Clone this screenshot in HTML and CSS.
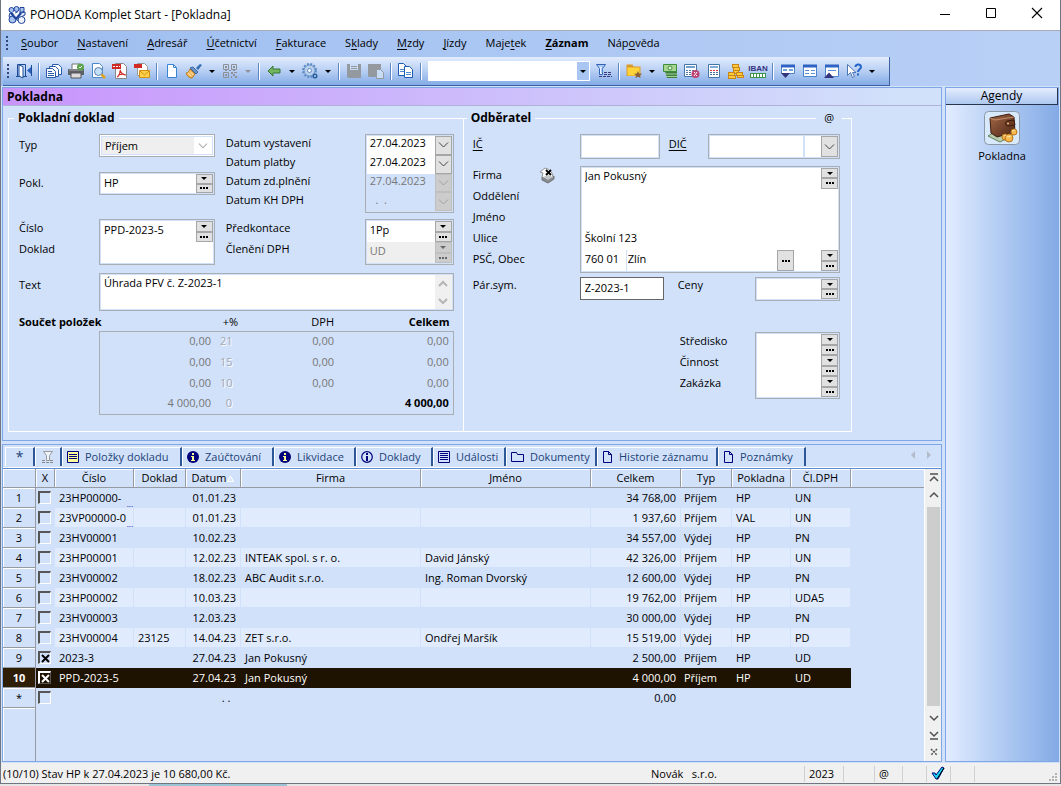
FILE: index.html
```
<!DOCTYPE html>
<html lang="cs">
<head>
  <meta charset="UTF-8">
  <meta name="viewport" content="width=device-width, initial-scale=1.0">
  <title>POHODA Komplet Start - [Pokladna]</title>
  <link rel="stylesheet" href="styles.css">
</head>
<body>
  <div class="window">
    <header class="titlebar">
      <svg class="logo" width="18" height="18" viewBox="0 0 18 18"><g fill="#a9c3ef" stroke="#1c4299"><circle cx="3.500" cy="4" r="2.500"/><circle cx="8.500" cy="3" r="2.500"/><path d="M12 1.500h4v4l-4 1z"/><path d="M2 7l4 1 3-2 4 1 4-1v3l-4 2 1 2-3 2-4-2-4 1-2-4z" fill="#dfe9fb"/><circle cx="4.500" cy="13.500" r="3.500"/><circle cx="13.500" cy="14" r="3.500" fill="#eef3fd"/></g><path d="M3 7l5 6M13 7L8 13" fill="none" stroke="#1c4299" stroke-width="2"/><path d="M5 6l3 3 3-3" fill="none" stroke="#fff" stroke-width="1.500"/></svg>
      <span class="title">POHODA Komplet Start - [Pokladna]</span>
      <button class="wbtn" aria-label="Minimalizovat"><svg width="12" height="12" viewBox="0 0 12 12"><path d="M1 7.500h10" stroke="#000"/></svg></button>
      <button class="wbtn" aria-label="Maximalizovat"><svg width="12" height="12" viewBox="0 0 12 12"><path d="M1.500 1.500h9v9h-9z" fill="none" stroke="#000"/></svg></button>
      <button class="wbtn" aria-label="Zavřít"><svg width="12" height="12" viewBox="0 0 12 12"><path d="M1 1l10 10M11 1L1 11" stroke="#000" stroke-width="1.100"/></svg></button>
    </header>

    <nav class="menubar">
      <span class="grip"></span>
      <button><u>S</u>oubor</button>
      <button><u>N</u>astavení</button>
      <button><u>A</u>dresář</button>
      <button><u>Ú</u>četnictví</button>
      <button><u>F</u>akturace</button>
      <button>S<u>k</u>lady</button>
      <button><u>M</u>zdy</button>
      <button><u>J</u>ízdy</button>
      <button>Maje<u>t</u>ek</button>
      <button class="strong"><u>Z</u>áznam</button>
      <button>Náp<u>o</u>věda</button>
    </nav>

    <div class="toolrow">
      <div class="toolbar">
        <span class="grip"></span>
        <button class="tool" aria-label="Zavřít agendu"><svg viewBox="0 0 16 16"><path d="M1.500 13V1.500h8V13M0 13.500h11" fill="none" stroke="#1c4c95"/><path d="M3 2l4 1.500V15l-4-2z" fill="#fff" stroke="#1c4c95"/><path d="M11 7.500L15 4v7z" fill="#2b62c0"/><path d="M15.500 2v11" stroke="#1c4c95"/></svg></button>
        <span class="sep"></span>
        <button class="tool" aria-label="Kopie záznamů"><svg viewBox="0 0 16 16"><g fill="#fff" stroke="#2a5ca8"><path d="M6.500 1.500h6l3 3v7h-9z"/><path d="M3.500 3.500h6l3 3v7h-9z"/><path d="M.5 5.500h6l3 3v6H.5z"/></g><path d="M2 8.500h4M2 10.500h6M2 12.500h6" stroke="#2a5ca8"/></svg></button>
        <button class="tool" aria-label="Tisk"><svg viewBox="0 0 16 16"><path d="M4 6V1h8v5" fill="#fff" stroke="#777"/><path d="M0 6h16v6H0z" fill="#5d6066"/><path d="M1 7h14" stroke="#aaa"/><path d="M3 10h10v5H3z" fill="#ddd" stroke="#555"/><circle cx="12.500" cy="4" r="3.500" fill="#5aa54c"/><path d="M11 4l1 1 2-2" fill="none" stroke="#fff"/></svg></button>
        <button class="tool" aria-label="Náhled"><svg viewBox="0 0 16 16"><path d="M2.500.5h7l3 3v11h-10z" fill="#fff" stroke="#4a88c8"/><circle cx="8.500" cy="8.500" r="4" fill="#c3e0fa" stroke="#5a7fae"/><path d="M11.500 11.500l3.500 3.500" stroke="#e3a21c" stroke-width="2.500"/></svg></button>
        <button class="tool" aria-label="PDF"><svg viewBox="0 0 16 16"><path d="M3.500.5h8l3 3v12h-11z" fill="#fff" stroke="#888"/><path d="M0 1h9v5H0z" fill="#cf2b24"/><path d="M1 3.500h7" stroke="#fff" stroke-dasharray="2 1"/><path d="M8 7c1 3 2 5 6 5M8 8c0 3-1 5-3 6M6 12l6-1" fill="none" stroke="#cf2b24" stroke-width="1.200"/></svg></button>
        <button class="tool" aria-label="PDF e-mailem"><svg viewBox="0 0 16 16"><path d="M3.500.5h7l3 3v9h-10z" fill="#fff" stroke="#999"/><path d="M0 1h8v4H0z" fill="#cf2b24"/><path d="M5.500 7.500h10v7h-10z" fill="#ffd04a" stroke="#d38e12"/><path d="M6 8l4.500 4L15 8" fill="none" stroke="#d38e12"/></svg></button>
        <span class="sep"></span>
        <button class="tool" aria-label="Nový"><svg viewBox="0 0 16 16"><path d="M3.500 1.500h6l3 3v10h-9z" fill="#fff" stroke="#3a84d4"/><path d="M9.500 1.500v3h3" fill="none" stroke="#3a84d4"/></svg></button>
        <button class="tool" aria-label="Vzhled"><svg viewBox="0 0 16 16"><path d="M10 5l4-4 2 1-4 5z" fill="#356cb2"/><path d="M7 4l5 5-2 2-6-6z" fill="#6b95cb" stroke="#3e66a0"/><path d="M4 6l5 5-3 4c-3 0-5-2-6-5 2 0 3-2 4-4z" fill="#f1b85c" stroke="#b87c26"/><path d="M2 10l3 3M5 9l2 3" stroke="#fbe2ae"/></svg></button>
        <button class="caret" aria-label="Další"></button>
        <button class="tool" disabled aria-label="QR kód"><svg viewBox="0 0 16 16"><path d="M1.500 1.500h5v5h-5zM9.500 1.500h5v5h-5zM1.500 9.500h5v5h-5z" fill="none" stroke="#8d9096"/><path d="M3 3h2v2H3zM11 3h2v2h-2zM3 11h2v2H3zM9 9h2v2H9zM12 9h3v1h-3zM11 11h2v2h-2zM9 13h1v2H9zM13 13h2v2h-2zM7 7h2v1H7zM11 7h2v1h-2zM3 7h2v1H3z" fill="#8d9096"/></svg></button>
        <button class="caret off" disabled aria-label="Další"></button>
        <span class="sep"></span>
        <button class="tool" aria-label="Zpět"><svg viewBox="0 0 16 16"><path d="M2 8l5-5v3h7v4H7v3z" fill="#73b55e" stroke="#35763a"/></svg></button>
        <button class="caret" aria-label="Další"></button>
        <button class="tool" aria-label="Nastavení"><svg viewBox="0 0 16 16"><circle cx="7.500" cy="7.500" r="6.500" fill="none" stroke="#5e8cc4" stroke-width="2" stroke-dasharray="2 1.400"/><circle cx="7.500" cy="7.500" r="5.500" fill="#b9d0ed" stroke="#5e8cc4"/><circle cx="7.500" cy="7.500" r="2" fill="#fff" stroke="#5e8cc4"/><circle cx="13" cy="13" r="2.500" fill="#285d9b"/><circle cx="13" cy="13" r="1" fill="#b9d0ed"/></svg></button>
        <button class="caret" aria-label="Další"></button>
        <span class="sep"></span>
        <button class="tool" disabled aria-label="Uložit"><svg viewBox="0 0 16 16"><path d="M1 1h14v14H2l-1-1z" fill="#94989f"/><path d="M4 1h8v6H4z" fill="#c9dcf5"/><path d="M5 3.500h6M5 5.500h6" stroke="#94989f"/></svg></button>
        <button class="tool" disabled aria-label="Uložit kopii"><svg viewBox="0 0 16 16"><path d="M0 1h13v13H1l-1-1z" fill="#94989f"/><path d="M8.500 6.500h4l3 3v6h-7z" fill="#c9dcf5" stroke="#94989f"/></svg></button>
        <span class="sep"></span>
        <button class="tool" aria-label="Kopírovat"><svg viewBox="0 0 16 16"><g fill="#fff" stroke="#1c5cb0"><path d="M.5.5h5l3 3v9h-8z"/><path d="M6.500 3.500h5l3 3v8h-8z"/></g><path d="M2 6.500h4M2 8.500h4M8 9.500h5M8 11.500h5" stroke="#4e8ad0"/></svg></button>
        <span class="sep"></span>
        <select class="find" aria-label="Hledat"><option></option></select>
        <button class="tool" aria-label="Filtr"><svg viewBox="0 0 16 16"><path d="M.5 1.500h9l-3 4v6h-3v-6z" fill="#eaf3ff" stroke="#2f62b8"/><path d="M2 3h6l-2 2v5" fill="none" stroke="#6ea0e4"/><path d="M3 13.500h13M8 11.500h8M8 9.500h8" stroke="#3b3a7c" stroke-dasharray="3 1"/></svg></button>
        <span class="sep"></span>
        <button class="tool" aria-label="Oblíbené"><svg viewBox="0 0 16 16"><path d="M.5 13V1.500h6l1 2h7V13z" fill="#d99a2c"/><path d="M1.500 12.500v-8h12v8z" fill="#ffd438"/><path d="M12 8l1.200 2.400 2.800.3-2 1.800.6 2.500-2.600-1.300L9.400 15l.6-2.500-2-1.800 2.800-.3z" fill="#8b6238"/></svg></button>
        <button class="caret" aria-label="Další"></button>
        <button class="tool" aria-label="Hotovost"><svg viewBox="0 0 16 16"><path d="M2 5h13v10H5z" fill="#3b7e40"/><path d="M3 11h12M4 13.500h11" stroke="#a8d09a"/><path d="M1.500 1.500h13v7h-13z" fill="#a8d690" stroke="#3e8c3d"/><circle cx="8" cy="5" r="2" fill="#e3f6d5" stroke="#3e8c3d"/></svg></button>
        <button class="tool" aria-label="Kalkulačka daně"><svg viewBox="0 0 16 16"><path d="M.5 1.500h12v12H.5z" fill="#fff" stroke="#4875a8"/><path d="M2 3h9v2H2z" fill="#719fd0"/><path d="M2 7.500h9M2 9.500h6M2 11.500h6" stroke="#5379a7" stroke-dasharray="2 1"/><circle cx="11.500" cy="11" r="4" fill="#bd4473"/><path d="M13 9l-3 4M10 9.500h1M12 12.500h1" stroke="#fff"/></svg></button>
        <button class="tool" aria-label="Kalkulačka"><svg viewBox="0 0 16 16"><path d="M2.500 1.500h11v13h-11z" fill="#fff" stroke="#4875a8"/><path d="M4 3h8v2H4z" fill="#82abe0"/><path d="M4 7.500h8" stroke="#d33" stroke-dasharray="2 1"/><path d="M4 9.500h8M4 11.500h8" stroke="#416f9e" stroke-dasharray="2 1"/></svg></button>
        <button class="tool" aria-label="Mince"><svg viewBox="0 0 16 16"><g fill="#ffc93c" stroke="#c8861a"><rect x="4.500" y="1.500" width="6" height="3"/><rect x="5.500" y="4.500" width="6" height="3"/><rect x="5.500" y="7.500" width="5" height="3"/><rect x=".5" y="9.500" width="6" height="3"/><rect x=".5" y="12.500" width="7" height="3"/><rect x="8.500" y="9.500" width="6" height="3"/><rect x="9.500" y="12.500" width="6" height="2"/></g></svg></button>
        <button class="tool iban" aria-label="Kontrola IBAN"><b>IBAN</b><i></i></button>
        <span class="sep"></span>
        <button class="tool" aria-label="Dolní okno"><svg viewBox="0 0 16 16"><path d="M1.500 2.500h13v8h-13z" fill="#fff" stroke="#4c84cb"/><path d="M1 1.500h14v3H1z" fill="#2e63c4"/><path d="M3 7h4M9 7h4" stroke="#74a3dc" stroke-width="2"/><path d="M1 10h9l-4.500 5z" fill="#34347d"/></svg></button>
        <button class="tool" aria-label="Okno"><svg viewBox="0 0 16 16"><path d="M1.500 2.500h13v11h-13z" fill="#fff" stroke="#4c84cb"/><path d="M1 1.500h14v3H1z" fill="#2e63c4"/><path d="M3 7.500h4M9 7.500h4M3 10.500h4M9 10.500h4" stroke="#5c8dce"/></svg></button>
        <button class="tool" aria-label="Horní okno"><svg viewBox="0 0 16 16"><path d="M1.500 2.500h13v11h-13z" fill="#fff" stroke="#4c84cb"/><path d="M1 1.500h14v3H1z" fill="#2e63c4"/><path d="M4 7.500h8" stroke="#5c8dce"/><path d="M0 15h10L5 9.500z" fill="#34347d"/></svg></button>
        <button class="tool" aria-label="Nápověda"><svg viewBox="0 0 16 16"><path d="M1.500 1.500v11l3-3 2 5 2-1-2-4h3.500z" fill="#fff" stroke="#4d76b4"/><path d="M9.500 4c0-3.500 5.500-3.500 5.500 0 0 2-3 2.500-3 5M12 10.500v2" fill="none" stroke="#2767c8" stroke-width="2"/></svg></button>
        <button class="caret" aria-label="Další"></button>
      </div>
    </div>

    <main class="work">
      <div class="agenda">
        <section class="panel">
          <h1>Pokladna</h1>
          <form class="form">
            <fieldset class="doc">
              <legend>Pokladní doklad</legend>
              <div class="pair">
                <div class="fields left">
                  <label for="typ">Typ</label>
                  <div class="box typ"><select id="typ" disabled><option>Příjem</option></select></div>
                  <label for="pokl">Pokl.</label>
                  <div class="box pokl">
                    <div class="line"><input id="pokl" value="HP"><span class="spin"><button type="button" class="drop" aria-label="Seznam"></button><button type="button" class="dots" aria-label="Vybrat"></button></span></div>
                  </div>
                  <div class="labels high"><label for="cislo">Číslo</label><label for="doklad">Doklad</label></div>
                  <div class="box">
                    <div class="line"><input id="cislo" value="PPD-2023-5"><span class="spin"><button type="button" class="drop" aria-label="Seznam"></button><button type="button" class="dots" aria-label="Vybrat"></button></span></div>
                    <div class="line"><input id="doklad"></div>
                  </div>
                </div>
                <div class="fields right">
                  <div class="labels high dates"><label for="d1">Datum vystavení</label><label for="d2">Datum platby</label><label for="d3">Datum zd.plnění</label><label for="d4">Datum KH DPH</label></div>
                  <div class="box dates">
                    <div class="line"><input id="d1" value="27.04.2023"><button type="button" class="chev" aria-label="Kalendář"></button></div>
                    <div class="line"><input id="d2" value="27.04.2023"><button type="button" class="chev" aria-label="Kalendář"></button></div>
                    <div class="line"><input id="d3" value="27.04.2023" disabled><button type="button" class="chev" disabled aria-label="Kalendář"></button></div>
                    <div class="line"><input id="d4" value="  .  ." disabled><button type="button" class="chev" disabled aria-label="Kalendář"></button></div>
                  </div>
                  <div class="labels high"><label for="predk">Předkontace</label><label for="clen">Členění DPH</label></div>
                  <div class="box">
                    <div class="line"><input id="predk" value="1Pp"><span class="spin"><button type="button" class="drop" aria-label="Seznam"></button><button type="button" class="dots" aria-label="Vybrat"></button></span></div>
                    <div class="line"><input id="clen" class="grey" value="UD" disabled><span class="spin"><button type="button" class="drop" disabled aria-label="Seznam"></button><button type="button" class="dots" disabled aria-label="Vybrat"></button></span></div>
                  </div>
                </div>
              </div>
              <div class="textrow">
                <label for="text">Text</label>
                <div class="box"><textarea id="text">Úhrada PFV č. Z-2023-1</textarea>
                  <span class="mini"><svg viewBox="0 0 10 8"><path d="M1 6l4-4 4 4"/></svg><svg viewBox="0 0 10 8"><path d="M1 2l4 4 4-4"/></svg></span></div>
              </div>
              <table class="totals">
                <colgroup><col class="t-label"><col class="t-base"><col class="t-pct"><col class="t-dph"><col></colgroup>
                <thead><tr><th colspan="2">Součet položek</th><th class="pct">+%</th><th class="dph">DPH</th><th>Celkem</th></tr></thead>
                <tbody>
                  <tr><td></td><td>0,00</td><td>21</td><td>0,00</td><td>0,00</td></tr>
                  <tr><td></td><td>0,00</td><td>15</td><td>0,00</td><td>0,00</td></tr>
                  <tr><td></td><td>0,00</td><td>10</td><td>0,00</td><td>0,00</td></tr>
                  <tr><td></td><td>4 000,00</td><td>&nbsp; 0</td><td></td><td class="sum">4 000,00</td></tr>
                </tbody>
              </table>
            </fieldset>

            <fieldset class="buyer">
              <legend>Odběratel</legend>
              <span class="at">@</span>
              <div class="brow ids">
                <label for="ic"><u>IČ</u></label>
                <div class="box ic"><div class="line"><input id="ic"></div></div>
                <label for="dic" class="diclabel"><u>DIČ</u></label>
                <div class="box dic"><div class="line"><input id="dic"><input class="dicend" aria-label="DIČ skupiny"><button type="button" class="chev" aria-label="Seznam"></button></div></div>
              </div>
              <div class="brow addr">
                <div class="labels"><label for="firma">Firma</label><label for="odd">Oddělení</label><label for="jm">Jméno</label><label for="ul">Ulice</label><label for="psc">PSČ, Obec</label></div>
                <svg class="cube" width="16" height="18" viewBox="0 0 16 18"><path d="M3 11l6 3 6-4v3l-6 4-6-3z" fill="#8b8f94" stroke="#6d7074"/><path d="M3 11l1-4-3-1 5-4 3 1 4 4 1 4-5 2z" fill="#fff" stroke="#8f949b"/><path d="M4 11l5-2 5 2-5 3z" fill="#c2c5ca"/><path d="M7 4l5 5M12 4L7 9" stroke="#000" stroke-width="1.800"/></svg>
                <div class="box addrbox">
                  <div class="line"><input id="firma" value="Jan Pokusný"><span class="spin"><button type="button" class="drop" aria-label="Seznam"></button><button type="button" class="dots" aria-label="Vybrat"></button></span></div>
                  <div class="line"><input id="odd"></div>
                  <div class="line"><input id="jm"></div>
                  <div class="line"><input id="ul" value="Školní 123"></div>
                  <div class="line"><input id="psc" class="zip" value="760 01"><input class="city" aria-label="Obec" value="Zlín"><button type="button" class="dots tall" aria-label="Vybrat obec"></button><span class="hole"></span><span class="spin"><button type="button" class="drop" aria-label="Seznam"></button><button type="button" class="dots" aria-label="Vybrat"></button></span></div>
                </div>
              </div>
              <div class="brow last">
                <label for="par">Pár.sym.</label>
                <div class="box par"><div class="line"><input id="par" value="Z-2023-1"></div></div>
                <label for="ceny" class="cenylabel">Ceny</label>
                <div class="box small"><div class="line"><input id="ceny"><span class="spin"><button type="button" class="drop" aria-label="Seznam"></button><button type="button" class="dots" aria-label="Vybrat"></button></span></div></div>
              </div>
              <div class="brow centre">
                <div class="labels"><label for="st">Středisko</label><label for="ci">Činnost</label><label for="za">Zakázka</label></div>
                <div class="box small">
                  <div class="line"><input id="st"><span class="spin"><button type="button" class="drop" aria-label="Seznam"></button><button type="button" class="dots" aria-label="Vybrat"></button></span></div>
                  <div class="line"><input id="ci"><span class="spin"><button type="button" class="drop" aria-label="Seznam"></button><button type="button" class="dots" aria-label="Vybrat"></button></span></div>
                  <div class="line"><input id="za"><span class="spin"><button type="button" class="drop" aria-label="Seznam"></button><button type="button" class="dots" aria-label="Vybrat"></button></span></div>
                </div>
              </div>
            </fieldset>
          </form>
        </section>

        <section class="panel lower">
          <div class="tabs">
            <button class="tab star">*</button>
            <button class="tab funnel" aria-label="Filtr"><svg width="14" height="14" viewBox="0 0 14 14"><path d="M2.500 1.500h9l-3 4v5h-3v-5z" fill="#eef4fd" stroke="#999"/><path d="M1 10.500h4M9 10.500h4M1 12.500h12" stroke="#888" stroke-dasharray="3 1"/></svg></button>
            <button class="tab items"><svg width="12" height="12" viewBox="0 0 12 12"><path d="M.5.5h11v11H.5z" fill="#ff9" stroke="#00007c"/><path d="M2 3.500h8M2 5.500h8M2 7.500h8" stroke="#00007c"/></svg>Položky dokladu</button>
            <button class="tab post"><svg width="12" height="12" viewBox="0 0 12 12"><circle cx="6" cy="6" r="6" fill="#00007c"/><path d="M5 2h2v2H5zM4 5h3v4h1v1H4V9h1V6H4z" fill="#ff9"/></svg>Zaúčtování</button>
            <button class="tab pay"><svg width="12" height="12" viewBox="0 0 12 12"><circle cx="6" cy="6" r="6" fill="#00007c"/><path d="M5 2h2v2H5zM4 5h3v4h1v1H4V9h1V6H4z" fill="#ff9"/></svg>Likvidace</button>
            <button class="tab docs"><svg width="12" height="12" viewBox="0 0 12 12"><circle cx="6" cy="6" r="5.300" fill="none" stroke="#00007c" stroke-width="1.200"/><path d="M5 2h2v2H5zM5 5h2v5H5z" fill="#00007c"/></svg>Doklady</button>
            <button class="tab events"><svg width="12" height="12" viewBox="0 0 12 12"><path d="M.5.5h11v11H.5z" fill="none" stroke="#00007c"/><path d="M2 2.500h8M2 4.500h8M2 6.500h8M2 8.500h8" stroke="#00007c"/></svg>Události</button>
            <button class="tab files"><svg width="13" height="12" viewBox="0 0 13 12"><path d="M.5 10.500v-9h5l1 2h6v7z" fill="none" stroke="#00007c"/></svg>Dokumenty</button>
            <button class="tab history"><svg width="11" height="12" viewBox="0 0 11 12"><path d="M1.500.5h5l3 3v8h-8zM6.500.5v3h3" fill="none" stroke="#00007c"/></svg>Historie záznamu</button>
            <button class="tab notes"><svg width="11" height="12" viewBox="0 0 11 12"><path d="M1.500.5h5l3 3v8h-8zM6.500.5v3h3" fill="none" stroke="#00007c"/></svg>Poznámky</button>
            <span class="tabnav"><svg width="22" height="8" viewBox="0 0 22 8"><path d="M4 0v8L0 4zM16 0v8l4-4z" fill="#b5bcc9"/></svg></span>
          </div>
          <div class="gridwrap">
            <div class="gridarea">
              <table class="grid">
                <colgroup><col class="c-no"><col class="c-x"><col class="c-num"><col class="c-doc"><col class="c-date"><col class="c-firm"><col class="c-name"><col class="c-total"><col class="c-typ"><col class="c-cash"><col class="c-vat"><col></colgroup>
                <thead><tr><th></th><th>X</th><th>Číslo</th><th>Doklad</th><th class="sorted">Datum<svg width="7" height="7" viewBox="0 0 7 7"><path d="M.5 6.500L3.500 1l3 5.500z" fill="#dce8fb" stroke="#fff"/></svg></th><th>Firma</th><th>Jméno</th><th>Celkem</th><th>Typ</th><th>Pokladna</th><th>Čl.DPH</th><th></th></tr></thead>
                <tbody>
                  <tr><th>1</th><td><input type="checkbox" aria-label="Označit 1"></td><td>23HP00000-<a href="#">...</a></td><td></td><td>01.01.23</td><td></td><td></td><td>34 768,00</td><td>Příjem</td><td>HP</td><td>UN</td><td></td></tr>
                  <tr><th>2</th><td><input type="checkbox" aria-label="Označit 2"></td><td>23VP00000-0<a href="#">...</a></td><td></td><td>01.01.23</td><td></td><td></td><td>1 937,60</td><td>Příjem</td><td>VAL</td><td>UN</td><td></td></tr>
                  <tr><th>3</th><td><input type="checkbox" aria-label="Označit 3"></td><td>23HV00001</td><td></td><td>10.02.23</td><td></td><td></td><td>34 557,00</td><td>Výdej</td><td>HP</td><td>PN</td><td></td></tr>
                  <tr><th>4</th><td><input type="checkbox" aria-label="Označit 4"></td><td>23HP00001</td><td></td><td>12.02.23</td><td>INTEAK spol. s r. o.</td><td>David Jánský</td><td>42 326,00</td><td>Příjem</td><td>HP</td><td>UN</td><td></td></tr>
                  <tr><th>5</th><td><input type="checkbox" aria-label="Označit 5"></td><td>23HV00002</td><td></td><td>18.02.23</td><td>ABC Audit s.r.o.</td><td>Ing. Roman Dvorský</td><td>12 600,00</td><td>Výdej</td><td>HP</td><td>PN</td><td></td></tr>
                  <tr><th>6</th><td><input type="checkbox" aria-label="Označit 6"></td><td>23HP00002</td><td></td><td>10.03.23</td><td></td><td></td><td>19 762,00</td><td>Příjem</td><td>HP</td><td>UDA5</td><td></td></tr>
                  <tr><th>7</th><td><input type="checkbox" aria-label="Označit 7"></td><td>23HV00003</td><td></td><td>12.03.23</td><td></td><td></td><td>30 000,00</td><td>Výdej</td><td>HP</td><td>PN</td><td></td></tr>
                  <tr><th>8</th><td><input type="checkbox" aria-label="Označit 8"></td><td>23HV00004</td><td>23125</td><td>14.04.23</td><td>ZET s.r.o.</td><td>Ondřej Maršík</td><td>15 519,00</td><td>Výdej</td><td>HP</td><td>PD</td><td></td></tr>
                  <tr><th>9</th><td><input type="checkbox" checked aria-label="Označit 9"></td><td>2023-3</td><td></td><td>27.04.23</td><td>Jan Pokusný</td><td></td><td>2 500,00</td><td>Příjem</td><td>HP</td><td>UD</td><td></td></tr>
                  <tr class="selected"><th>10</th><td><input type="checkbox" checked aria-label="Označit 10"></td><td>PPD-2023-5</td><td></td><td>27.04.23</td><td>Jan Pokusný</td><td></td><td>4 000,00</td><td>Příjem</td><td>HP</td><td>UD</td><td></td></tr>
                  <tr><th>*</th><td><input type="checkbox" aria-label="Označit nový"></td><td></td><td></td><td>. . &nbsp;</td><td></td><td></td><td>0,00</td><td></td><td></td><td></td><td></td></tr>
                </tbody>
              </table>
              <div class="gutter"></div>
            </div>
            <div class="scroll">
              <svg viewBox="0 0 10 10"><path d="M1 1h8M1 8l4-4 4 4"/></svg>
              <svg viewBox="0 0 10 10"><path d="M1 7l4-4 4 4"/></svg>
              <span class="thumb"></span>
              <svg viewBox="0 0 10 10"><path d="M1 3l4 4 4-4"/></svg>
              <svg viewBox="0 0 10 10"><path d="M1 2l4 4 4-4M1 9h8"/></svg>
              <svg viewBox="0 0 10 10"><path d="M2 2l6 6M8 2L2 8" stroke-dasharray="2 1"/></svg>
            </div>
          </div>
        </section>
      </div>

      <aside class="side">
        <button class="sidehead">Agendy</button>
        <button class="shortcut">
          <svg width="36" height="34" viewBox="0 0 36 34"><defs><linearGradient id="leather" x1="0" y1="0" x2="1" y2="1"><stop offset="0" stop-color="#a56a48"/><stop offset="1" stop-color="#4b2414"/></linearGradient></defs><rect x=".5" y=".5" width="35" height="33" rx="4" fill="#d8e9fb" stroke="#8b98a6"/><path d="M4 25l8-5 12 7-8 4z" fill="#b8ceb0" stroke="#64805e"/><path d="M6 7l19-4 5 3 1 15-18 5-6-4z" fill="url(#leather)" stroke="#3d1c10"/><path d="M6 7l5 2 19-3" fill="none" stroke="#c08d6c"/><path d="M30 9l-7 1c-2 1-2 4 0 5l8-1z" fill="#6b3822" stroke="#3d1c10"/><circle cx="24" cy="12.500" r="1" fill="#e8c080"/><g fill="#f6b94e" stroke="#b97519"><circle cx="30" cy="21" r="3"/><circle cx="21" cy="26" r="3"/><circle cx="25" cy="27" r="4"/></g><path d="M28 20l3-1M20 25l2-1M23 26l4-1" stroke="#ffe9ad"/></svg>
          <span>Pokladna</span>
        </button>
      </aside>
    </main>

    <footer class="status">
      <span class="state">(10/10) Stav HP k 27.04.2023 je 10 680,00 Kč.</span>
      <span class="company">Novák &nbsp; s.r.o.</span>
      <span class="cell year">2023</span>
      <span class="cell gap"></span>
      <span class="cell mail">@</span>
      <span class="cell blank"></span>
      <span class="cell ok"><svg width="14" height="14" viewBox="0 0 14 14"><path d="M1 7l3 0 1 2 6-8 2 1-6 11H5z" fill="#19d3f0" stroke="#000080"/><path d="M6 13l7-11" stroke="#000"/></svg></span>
      <span class="cell blank"></span>
      <span class="cell size"><svg width="10" height="10" viewBox="0 0 10 10"><path d="M7 1h2v2H7zM7 4h2v2H7zM4 4h2v2H4zM7 7h2v2H7zM4 7h2v2H4zM1 7h2v2H1z" fill="#b4b4b4"/></svg></span>
    </footer>
  </div>
  <div class="behind"><span></span></div>
</body>
</html>
```
FILE: styles.css
```
* {
  box-sizing: border-box;
}
body {
  margin: 0;
  height: 100vh;
  display: flex;
  flex-direction: column;
  overflow: hidden;
  font: 11px/16px "Open Sans", "Noto Sans", sans-serif;
  color: #000;
  background: #e6e6e6;
}
button, input, select, textarea {
  font: inherit;
  color: inherit;
  margin: 0;
  padding: 0;
  border: 0;
  border-radius: 0;
  background: none;
  outline: none;
}
.window {
  flex: 1;
  min-height: 0;
  display: flex;
  flex-direction: column;
  border: 1px solid #6f7682;
  border-top: 0;
  background: #d1e1fa;
}

/* title bar */
.titlebar {
  display: flex;
  align-items: center;
  height: 31px;
  padding-left: 7px;
  background: #fff;
  border-bottom: 1px solid #a8adb5;
}
.title {
  flex: 1;
  margin-left: 4px;
  font-size: 12px;
}
.wbtn {
  width: 46px;
  height: 28px;
}

/* menu and toolbar */
.menubar {
  display: flex;
  align-items: center;
  height: 26px;
  padding: 0 0 2px 5px;
  background: linear-gradient(90deg, #9ebef0, #b9d0f6);
}
.menubar button {
  padding: 0 10px 0 9px;
}
.menubar .strong {
  font-weight: bold;
}
u {
  text-underline-offset: 2px;
}
.grip {
  width: 3px;
  height: 15px;
  margin-right: 3px;
  background: repeating-linear-gradient(#34487c 0 2px, transparent 2px 4px) 0 0 / 2px 100% no-repeat;
}
.toolrow {
  background: linear-gradient(90deg, #9ebef0, #b9d0f6);
}
.toolbar {
  display: flex;
  align-items: center;
  width: max-content;
  height: 29px;
  margin-left: 2px;
  padding: 0 10px 0 4px;
  background: linear-gradient(#e2ecfd, #bcd2f5 45%, #82abe6);
  border-bottom: 1px solid #3d629f;
  border-right: 1px solid #3d629f;
}
.tool {
  width: 22px;
  height: 22px;
  display: flex;
  align-items: center;
  justify-content: center;
}
.tool svg {
  flex: none;
  width: 16px;
  height: 16px;
}
.sep {
  width: 2px;
  height: 17px;
  margin: 0 3px;
  background: #5f86c2;
  border-right: 1px solid #fff;
}
.caret {
  width: 14px;
  height: 22px;
  display: flex;
  align-items: center;
  justify-content: center;
}
.caret::before, .drop::before {
  content: "";
  border: 3px solid transparent;
  border-top-color: #000;
  border-bottom: 0;
}
.caret.off::before {
  border-top-color: #8d9096;
}
.find {
  width: 162px;
  height: 20px;
  margin: 0 3px;
  appearance: none;
  border: 1px solid #fff;
  background: url("data:image/svg+xml,%3Csvg xmlns='http://www.w3.org/2000/svg' width='12' height='18'%3E%3Cpath fill='%23a9c6f2' d='M0 0h12v18H0z'/%3E%3Cpath d='M3 8h6l-3 3z'/%3E%3C/svg%3E") right center no-repeat #fff;
}
.iban {
  flex-direction: column;
}
.iban b {
  font: bold 8px/9px "Liberation Sans", sans-serif;
  color: #34347d;
}
.iban i {
  width: 16px;
  height: 5px;
  border: 1px solid #3c9447;
  background: repeating-linear-gradient(90deg, #fff 0 2px, #3c9447 2px 3px);
}

/* work area */
.work {
  flex: 1;
  min-height: 0;
  display: flex;
  gap: 3px;
  padding: 1px 1px 0;
}
.agenda {
  flex: 1;
  min-width: 0;
  display: flex;
  flex-direction: column;
  gap: 3px;
}
.panel {
  border: 1px solid #7fa7e5;
  background: #d1e1fa;
}
h1 {
  margin: 0;
  padding-left: 4px;
  height: 18px;
  font-size: 12px;
  line-height: 17px;
  background: linear-gradient(90deg, #c894fc, #d1e1fa 96%);
  border-bottom: 1px solid #b1b0d8;
}
.form {
  display: flex;
  padding: 3px 89px 8px 5px;
}
fieldset {
  position: relative;
  min-width: 0;
  margin: 0;
  border: 1px solid #fff;
}
legend {
  padding: 0 4px;
  font-size: 12px;
  line-height: 18px;
  font-weight: bold;
}
.doc {
  flex: 458 1 0;
  height: 323px;
  padding: 7px 9px 0 10px;
}
.doc legend {
  margin-left: -5px;
}
.buyer {
  flex: 387 1 0;
  height: 323px;
  border-left: 0;
  padding: 7px 11px 0 9px;
}
.buyer legend {
  margin-left: -6px;
}
.at {
  position: absolute;
  top: -17px;
  right: 9px;
  padding: 0 8px;
  background: #d1e1fa;
}
.pair {
  display: flex;
  gap: 11px;
}
.fields {
  display: grid;
  align-content: start;
}
.left {
  flex: 1;
  grid-template-columns: 80px 1fr;
  grid-template-rows: 38px 47px 46px;
}
.right {
  grid-template-columns: 139px 89px;
  grid-template-rows: 85px 46px;
}
.fields > label {
  padding-top: 3px;
}
.fields > .high {
  padding-top: 1px;
}
.labels {
  display: flex;
  flex-direction: column;
}
.labels label {
  height: 21px;
}
.dates label {
  height: 19px;
}
.box {
  display: flex;
  flex-direction: column;
  min-width: 0;
  border: 1px solid #a9adb4;
  padding: 1px;
  background: #d1e1fa;
}
.box.dates {
  height: 79px;
}
.typ {
  height: 23px;
  background: #fff;
}
.typ select {
  flex: 1;
  appearance: none;
  opacity: 1;
  padding-left: 3px;
  color: #000;
  -webkit-text-fill-color: #000;
  border: 1px solid #d1e1fa;
  background: url("data:image/svg+xml,%3Csvg xmlns='http://www.w3.org/2000/svg' width='18' height='18'%3E%3Cpath fill='%23fff' d='M0 0h18v18H0z'/%3E%3Cpath d='M5 7l4 4 4-4' fill='none' stroke='%23aaa'/%3E%3C/svg%3E") right center no-repeat #efefef;
}
.pokl {
  height: 23px;
}
.line {
  flex: 1;
  min-height: 0;
  display: flex;
}
.line input {
  flex: 1;
  width: 0;
  min-width: 0;
  padding: 0 0 4px 3px;
  background: #fff;
}
.pokl input, .par input {
  padding-bottom: 1px;
}
.line input:disabled {
  color: #777;
  background: #d1e1fa;
}
.line .grey:disabled {
  background: #efefef;
}
.spin {
  width: 17px;
  display: flex;
  flex-direction: column;
}
.drop, .dots, .chev {
  flex: 1;
  min-height: 0;
  display: flex;
  align-items: center;
  justify-content: center;
  background: #e1e1e1;
  border: 1px solid #a6a6a6;
}
.dots::before {
  content: "";
  width: 8px;
  height: 2px;
  background: repeating-linear-gradient(90deg, #000 0 2px, transparent 2px 3px);
}
.chev {
  flex: none;
  width: 17px;
  background: url("data:image/svg+xml,%3Csvg xmlns='http://www.w3.org/2000/svg' width='11' height='8'%3E%3Cpath d='M1 1.500l4.500 4.500L10 1.500' fill='none' stroke='%23444'/%3E%3C/svg%3E") center no-repeat #e1e1e1;
}
.spin button:disabled, .chev:disabled {
  background-color: #ccc;
  border-color: #bfbfbf;
}
.drop:disabled::before, .dots:disabled::before {
  opacity: 0.5;
}
.chev:disabled {
  background-image: url("data:image/svg+xml,%3Csvg xmlns='http://www.w3.org/2000/svg' width='11' height='8'%3E%3Cpath d='M1 1.500l4.500 4.500L10 1.500' fill='none' stroke='%23a0a0a0'/%3E%3C/svg%3E");
}
.textrow {
  display: flex;
  margin-top: 8px;
}
.textrow label {
  width: 80px;
  padding-top: 4px;
}
.textrow .box {
  flex: 1;
  flex-direction: row;
  height: 38px;
}
textarea {
  flex: 1;
  padding-left: 3px;
  resize: none;
  overflow: hidden;
  background: #fff;
}
.mini {
  width: 17px;
  display: flex;
  flex-direction: column;
  align-items: center;
  justify-content: space-around;
  background: #f0f0f0;
}
.mini svg {
  width: 10px;
  height: 8px;
  fill: none;
  stroke: #b5b5b5;
  stroke-width: 2;
}
.totals {
  width: 100%;
  margin-top: 1px;
  border-spacing: 0;
  table-layout: fixed;
}
.t-label {
  width: 80px;
}
.t-base {
  width: 116px;
}
.t-pct {
  width: 25px;
}
.t-dph {
  width: 98px;
}
.totals th, .totals td {
  padding: 0 4px 0 0;
  text-align: right;
}
.totals td {
  height: 21px;
  padding-bottom: 2px;
  color: #777;
}
.totals th {
  height: 19px;
}
.totals th:first-child {
  text-align: left;
}
.totals .pct, .totals .dph {
  font-weight: normal;
}
.totals .pct {
  padding-right: 2px;
}
.totals td:nth-child(2) {
  border-left: 1px solid #a9adb4;
}
.totals td:nth-child(3) {
  text-align: left;
  padding: 0 0 2px 5px;
  color: #a3a8b0;
  text-shadow: 1px 1px #fff;
}
.totals td:nth-child(5) {
  border-right: 1px solid #a9adb4;
}
.totals tbody tr:first-child td:not(:first-child) {
  border-top: 1px solid #a9adb4;
}
.totals tbody tr:last-child td:not(:first-child) {
  border-bottom: 1px solid #a9adb4;
}
.totals .sum {
  font-weight: bold;
  color: #000;
}

/* buyer */
.brow {
  display: flex;
  align-items: flex-start;
}
.brow > label {
  width: 107px;
  flex: none;
}
.ids > label {
  padding-top: 2px;
}
.ic {
  width: 80px;
  height: 25px;
}
.brow .diclabel {
  width: 48px;
  padding-left: 9px;
}
.dic {
  flex: 1;
  height: 25px;
}
.line .dicend {
  flex: none;
  width: 16px;
  margin-left: 2px;
}
.addr {
  margin-top: 7px;
}
.addr .labels {
  width: 66px;
  padding-top: 1px;
}
.cube {
  width: 16px;
  margin-right: 25px;
}
.addrbox {
  flex: 1;
  height: 107px;
}
.line .zip {
  flex: none;
  width: 44px;
}
.line .city {
  margin-left: 1px;
  padding-left: 1px;
}
.tall {
  flex: none;
  width: 17px;
}
.hole {
  width: 27px;
  background: #fff;
}
.last {
  margin-top: 4px;
}
.par {
  width: 84px;
  height: 23px;
  border-color: #666;
  background: #fff;
}
.brow .cenylabel {
  width: 91px;
  padding-left: 14px;
}
.small {
  flex: 1;
  min-height: 23px;
}
.centre {
  margin-top: 31px;
  padding-left: 207px;
}
.centre .labels {
  width: 75px;
  padding-top: 1px;
}
.centre .box {
  height: 67px;
}

/* tabs */
.lower {
  flex: 1;
  min-height: 0;
  display: flex;
  flex-direction: column;
}
.tabs {
  display: flex;
  height: 24px;
  padding: 2px 8px 2px 2px;
  border-bottom: 1px solid #5b8cd6;
  box-shadow: inset 0 -1px #fff;
  color: #1c4277;
}
.tab {
  display: flex;
  align-items: center;
  gap: 6px;
  padding: 0 4px;
  border-top: 1px solid #fff;
  border-left: 1px solid #fff;
  border-right: 2px solid #2d5796;
  white-space: nowrap;
}
.star {
  width: 30px;
  justify-content: center;
  font-size: 14px;
}
.funnel {
  width: 27px;
  justify-content: center;
}
.items {
  width: 120px;
}
.post {
  width: 92px;
}
.pay {
  width: 82px;
}
.docs {
  width: 77px;
}
.events {
  width: 73px;
}
.files {
  width: 91px;
}
.history {
  width: 121px;
}
.notes {
  width: 88px;
}
.tabnav {
  margin-left: auto;
}

/* record grid */
.gridwrap {
  flex: 1;
  min-height: 0;
  display: flex;
}
.gridarea {
  flex: 1;
  min-width: 0;
  display: flex;
  flex-direction: column;
}
.grid {
  width: 100%;
  table-layout: fixed;
  border-spacing: 0;
}
.c-no { width: 33px; }
.c-x { width: 19px; }
.c-num { width: 79px; }
.c-doc { width: 52px; }
.c-date { width: 55px; }
.c-firm { width: 180px; }
.c-name { width: 170px; }
.c-total { width: 90px; }
.c-typ { width: 51px; }
.c-cash { width: 59px; }
.c-vat { width: 60px; }
.grid th {
  height: 19px;
  padding: 0;
  font-weight: normal;
  border-right: 1px solid #969ba3;
  border-bottom: 1px solid #969ba3;
  box-shadow: inset 1px 1px #fff;
}
.grid thead th:last-child {
  border-right: 0;
}
.grid td {
  position: relative;
  height: 20px;
  padding: 0 4px;
  white-space: nowrap;
  border-right: 1px solid #d1e1fa;
  border-bottom: 1px solid #d1e1fa;
}
.grid tbody th {
  height: 20px;
}
.grid tbody tr:nth-child(even) td:not(:last-child):not(:nth-child(2)) {
  background: #e0ebfe;
}
.grid td:nth-child(2) {
  padding: 0 0 0 2px;
}
.grid td:nth-child(3) {
  padding: 0 0 0 4px;
}
.grid td:nth-child(5), .grid td:nth-child(8) {
  text-align: right;
}
.grid td:nth-child(9) {
  padding-left: 3px;
}
/* marker of a shortened number, lies over the cell's corner */
.grid a {
  position: absolute;
  right: 0;
  bottom: 0;
  color: #0000b0;
  text-decoration: none;
  font-size: 8px;
  line-height: 6px;
}
.sorted svg {
  margin-left: 1px;
}
.grid input {
  display: block;
  width: 13px;
  height: 13px;
  appearance: none;
  border: 1px solid #fff;
  border-top: 2px solid #555;
  border-left: 2px solid #555;
}
.grid input:checked {
  background: url("data:image/svg+xml,%3Csvg xmlns='http://www.w3.org/2000/svg' width='9' height='9'%3E%3Cpath d='M1 1l7 7M8 1L1 8' stroke='%23000' stroke-width='2'/%3E%3C/svg%3E") center no-repeat;
}
.grid tbody tr.selected td:not(:last-child):not(.none) {
  color: #fff;
  background: #1e1200;
  border-color: #1e1200;
}
.grid .selected th {
  color: #fff;
  font-weight: bold;
  background: #2e1e05;
  box-shadow: none;
}
.grid .selected input {
  border-color: #fff #555 #555 #fff;
  background: url("data:image/svg+xml,%3Csvg xmlns='http://www.w3.org/2000/svg' width='9' height='9'%3E%3Cpath d='M1 1l7 7M8 1L1 8' stroke='%23fff' stroke-width='2'/%3E%3C/svg%3E") center no-repeat;
}
.gutter {
  flex: 1;
  width: 33px;
  border-right: 1px solid #969ba3;
  box-shadow: inset 1px 1px #fff;
}
.scroll {
  width: 17px;
  display: flex;
  flex-direction: column;
  align-items: center;
  gap: 7px;
  padding: 4px 1px 4px 2px;
  background: #f0f0f0;
  border-left: 1px solid #fff;
}
.scroll svg {
  width: 10px;
  height: 10px;
  fill: none;
  stroke: #505050;
  stroke-width: 1.5;
}
.thumb {
  flex: 1;
  align-self: stretch;
  background: #cdcdcd;
}

/* agendas */
.side {
  width: 114px;
  display: flex;
  flex-direction: column;
  border: 1px solid #7fa7e5;
  background: linear-gradient(90deg, #e2ecff, #b5cef4 45%, #84abe6);
}
.sidehead {
  height: 17px;
  font-size: 12px;
  line-height: 16px;
  background: linear-gradient(#e4edfd, #aec8f1);
  border-right: 1px solid #26344d;
  border-bottom: 1px solid #26344d;
}
.shortcut {
  display: flex;
  flex-direction: column;
  align-items: center;
  gap: 3px;
  padding-top: 6px;
}

/* status bar */
.status {
  display: flex;
  align-items: center;
  height: 20px;
  padding: 3px 2px 1px;
  margin-top: 1px;
  background: #f0f0f0;
}
.state {
  flex: 1;
}
.company {
  width: 153px;
}
.cell {
  align-self: stretch;
  padding-left: 4px;
  border-left: 1px solid #d0d0d0;
}
.year {
  width: 39px;
}
.gap {
  width: 31px;
}
.mail {
  width: 28px;
}
.blank {
  width: 24px;
}
.ok {
  width: 24px;
}
.size {
  width: 84px;
  display: flex;
  align-items: flex-end;
  justify-content: flex-end;
}
.behind {
  height: 2px;
  padding-left: 149px;
  background: #e6e6e6;
}
.behind span {
  display: block;
  width: 138px;
  height: 2px;
  background: #9cc3d6;
}
```
